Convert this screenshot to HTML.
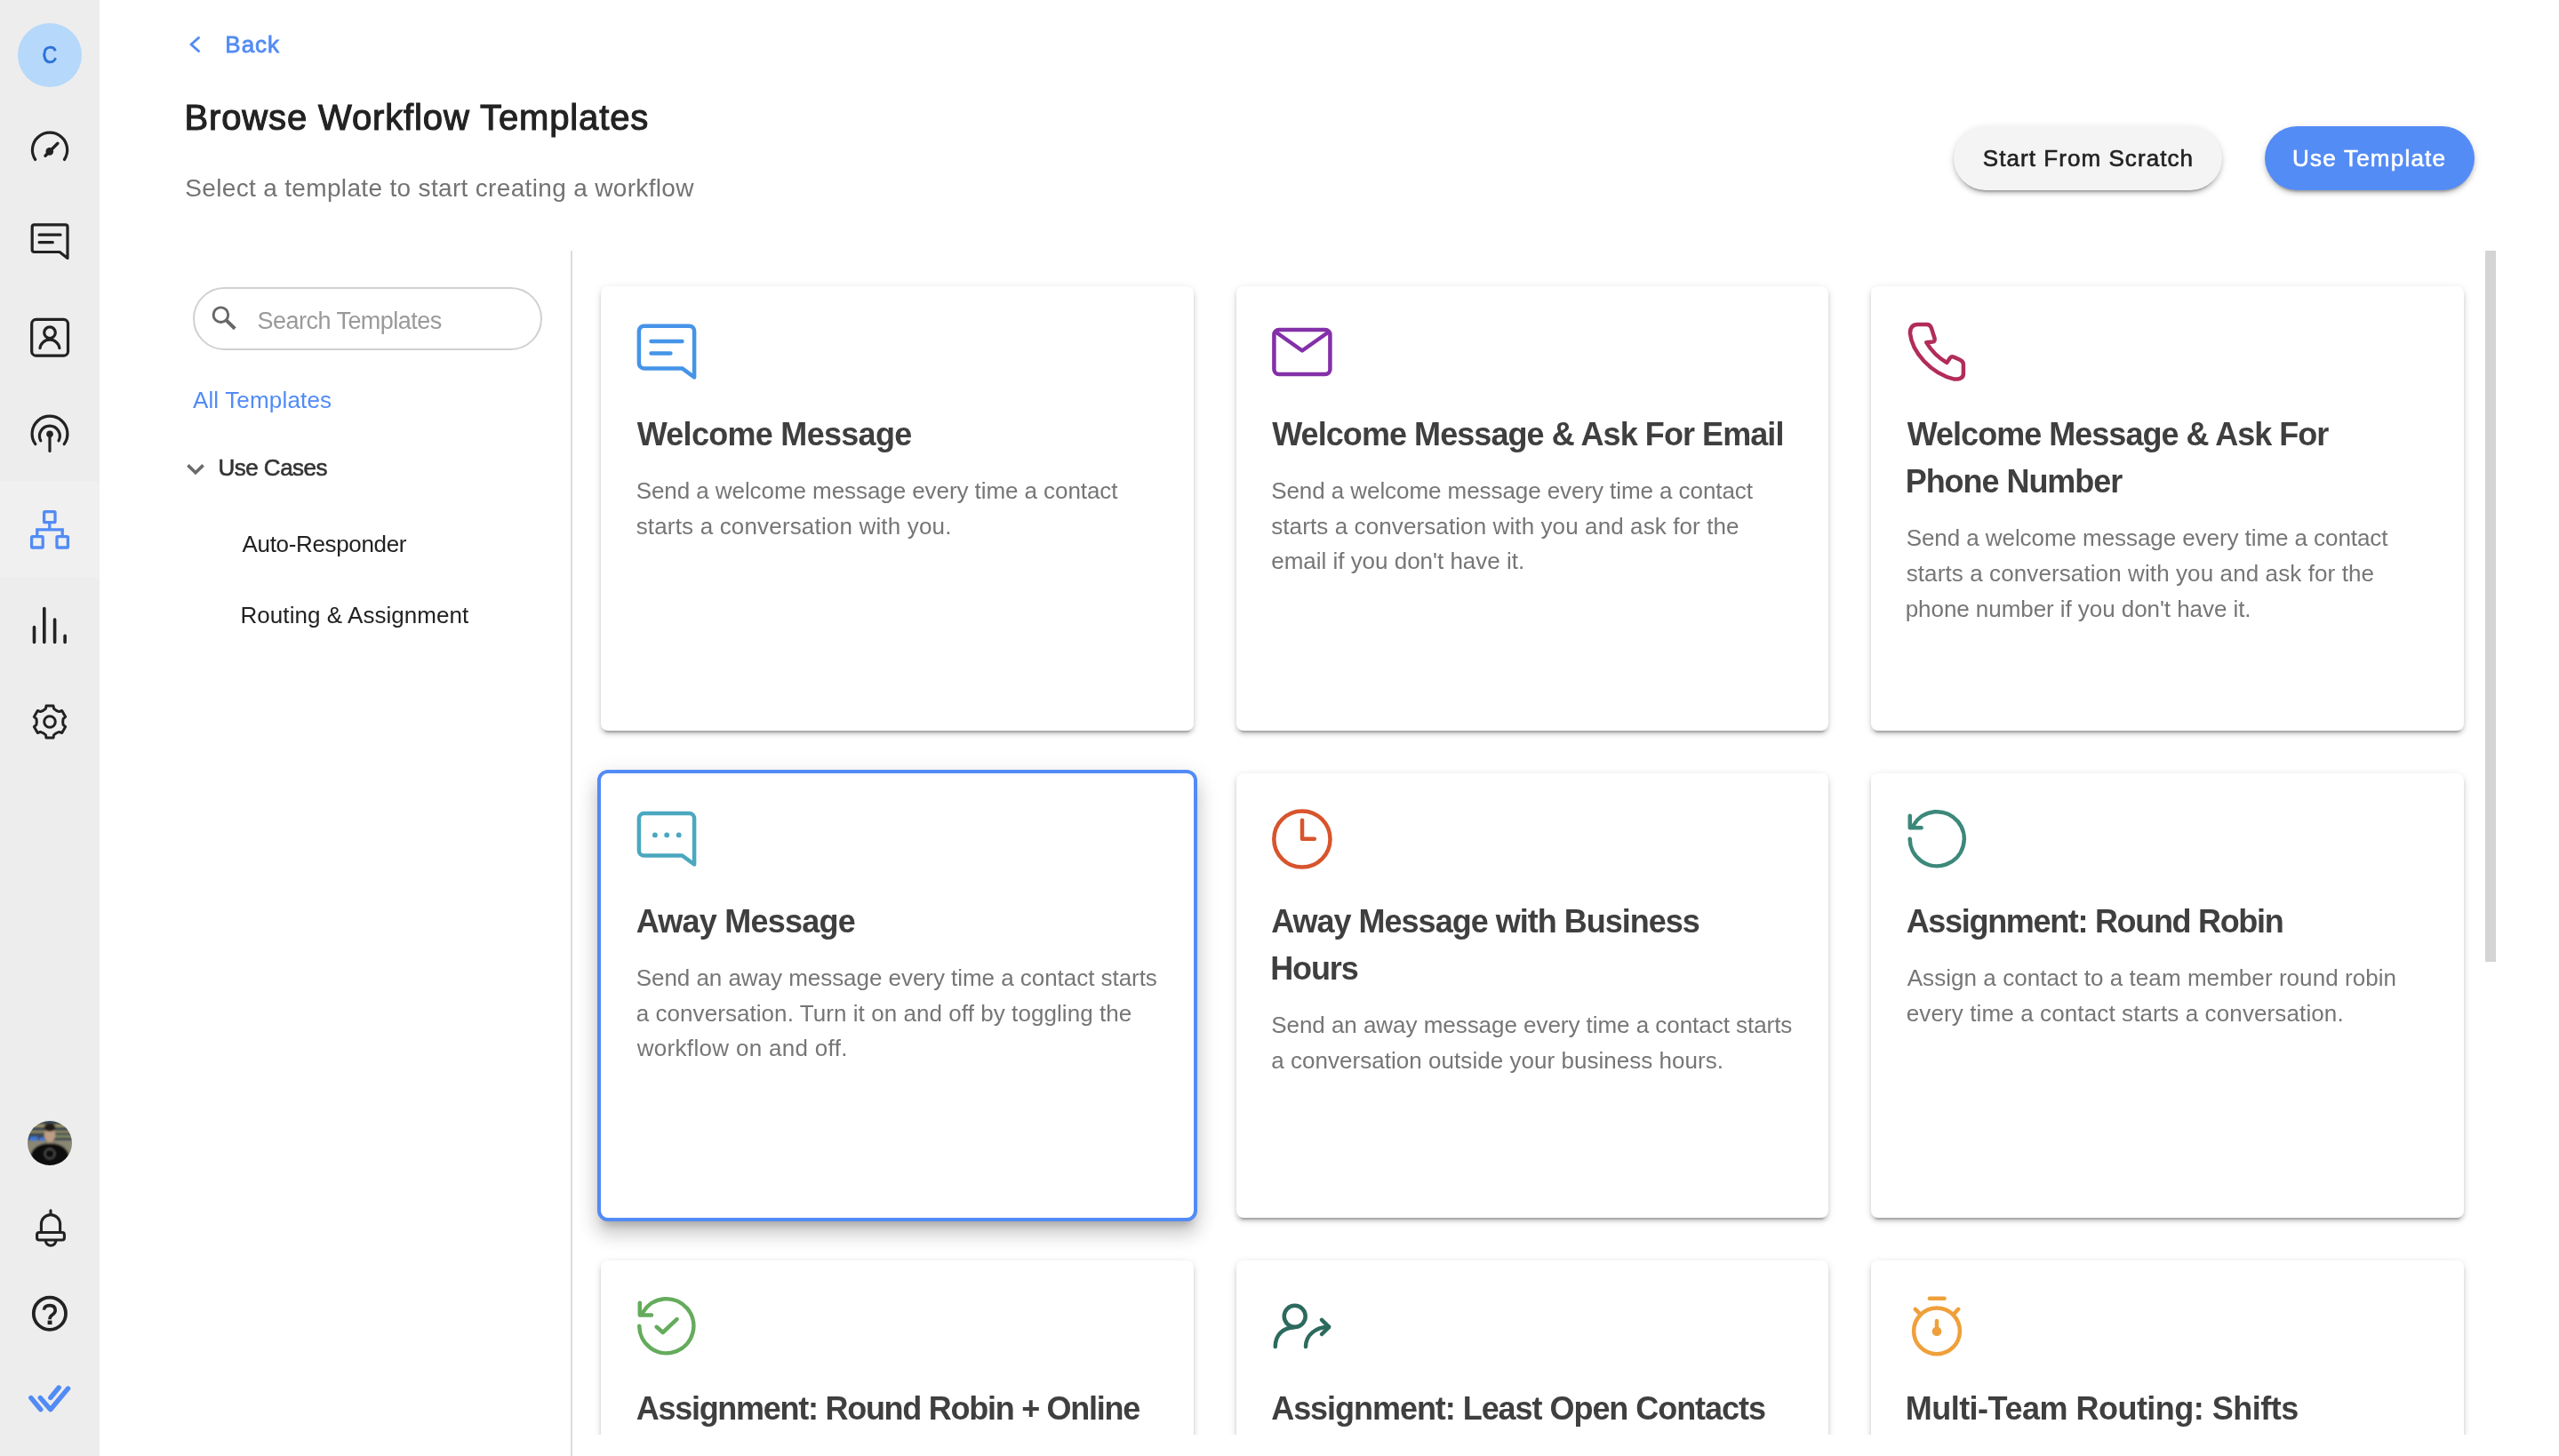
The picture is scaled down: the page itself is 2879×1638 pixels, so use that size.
<!DOCTYPE html>
<html><head><meta charset="utf-8"><title>Browse Workflow Templates</title>
<style>
html,body{margin:0;padding:0;}
body{width:2879px;height:1638px;position:relative;overflow:hidden;background:#fff;font-family:"Liberation Sans", sans-serif;}
.t{position:absolute;white-space:pre;}
.abs{position:absolute;}

#sb{position:absolute;left:0;top:0;width:112px;height:1638px;background:#ededed;}
#sbact{position:absolute;left:0;top:542px;width:112px;height:108px;background:#f0f0f0;}
.btn{position:absolute;border-radius:36px;}
#clip{position:absolute;left:644px;top:282px;width:2176px;height:1332px;overflow:hidden;}
.card{position:absolute;width:666.7px;height:500px;background:#fff;border-radius:8px;box-sizing:border-box;
 box-shadow:0px 6px 2px -4px rgba(0,0,0,0.2),0px 4px 4px 0px rgba(0,0,0,0.14),0px 2px 10px 0px rgba(0,0,0,0.12);}
.sel{width:674.7px;height:508px;margin-left:-4px;margin-top:-4px;border:4px solid #528bf5;border-radius:12px;
 box-shadow:0px 10px 10px -6px rgba(0,0,0,0.2),0px 16px 20px 2px rgba(0,0,0,0.12),0px 6px 24px 2px rgba(0,0,0,0.10);}

</style></head><body>
<div id="sb"></div><div id="sbact"></div><svg class="abs" style="left:0;top:0" width="112" height="1638" viewBox="0 0 112 1638" fill="none" stroke="#222" stroke-width="3.2" stroke-linecap="round" stroke-linejoin="round"><circle cx="56" cy="62" r="36" fill="#b5d8fb" stroke="none"/><path d="M39.7 179.5 A19.6 19.6 0 1 1 72.4 179.5"/><path d="M51 175.2 L64.9 161.3" stroke-width="3.4"/><circle cx="55.8" cy="170.4" r="4.3" fill="#222" stroke="none"/><path d="M38.7 252.8 H73.5 A2.5 2.5 0 0 1 76 255.3 V290.5 L67.1 283.5 H38.7 A2.5 2.5 0 0 1 36.2 281 V255.3 A2.5 2.5 0 0 1 38.7 252.8 Z"/><path d="M44.1 264.2 H68 M44.1 272.7 H59.3"/><rect x="35.7" y="359.4" width="40.8" height="40.8" rx="5"/><circle cx="56" cy="374.2" r="6.3"/><path d="M45 391.7 A11 10.5 0 0 1 66.9 391.7"/><path d="M39.8 499.6 A19.9 19.9 0 1 1 72.2 499.6"/><path d="M45.8 495.8 A11.4 11.4 0 1 1 66 495.8"/><circle cx="56" cy="488.2" r="3.8" fill="#222" stroke="none"/><path d="M56 488 V507.5"/><g stroke="#528bf5" stroke-width="3.3" stroke-linecap="butt" stroke-linejoin="miter"><rect x="49.6" y="575.7" width="12.4" height="12" rx="1"/><rect x="35.6" y="603.6" width="12.6" height="12.4" rx="1"/><rect x="64" y="603.6" width="12.4" height="12.4" rx="1"/><path d="M55.8 589 V595.8 M41.8 602 V595.8 H70.2 V602"/></g><path d="M38.5 705.5 V722.5 M49.8 684.5 V722.5 M61.6 697 V722.5 M73.1 715.3 V722.5" stroke-width="3.6"/><path d="M51.40 797.20 L52.00 793.90 L60.00 793.90 L60.60 797.20 Q63.10 799.70 66.52 800.62 L69.68 799.49 L73.68 806.41 L71.12 808.58 Q70.20 812.00 71.12 815.42 L73.68 817.59 L69.68 824.51 L66.52 823.38 Q63.10 824.30 60.60 826.80 L60.00 830.10 L52.00 830.10 L51.40 826.80 Q48.90 824.30 45.48 823.38 L42.32 824.51 L38.32 817.59 L40.88 815.42 Q41.80 812.00 40.88 808.58 L38.32 806.41 L42.32 799.49 L45.48 800.62 Q48.90 799.70 51.40 797.20 Z" stroke-width="3"/><circle cx="56" cy="812" r="6.3" stroke-width="3"/><path d="M57 1361.8 V1365.5 M46.4 1386 V1377.2 A10.6 10.6 0 0 1 67.6 1377.2 V1386" stroke-width="3.1"/><rect x="41.6" y="1386.5" width="30.8" height="8.5" rx="2.5" stroke-width="3.1"/><path d="M51.3 1395.5 A5.8 5.8 0 0 0 62.9 1395.5" stroke-width="3.1"/><circle cx="55.9" cy="1477.7" r="18.1" stroke-width="3.8"/><path d="M49.4 1473.6 Q49.8 1468.6 56 1468.6 Q62.2 1468.6 62.2 1474.2 Q62.2 1477 58.8 1479.2 Q56 1481 56 1484.2" stroke-width="3.6" stroke-linecap="butt" stroke-linejoin="miter"/><rect x="53.6" y="1485.6" width="4.9" height="4.5" fill="#222" stroke="none"/><path d="M34.8 1572.5 L45.8 1585.7 M45.3 1572.5 L56.8 1585.7 L76.6 1562 M56.8 1572.5 L66.2 1561" stroke="#528bf5" stroke-width="5.4"/></svg><svg class="abs" style="left:31px;top:1261px" width="50" height="50" viewBox="0 0 50 50"><defs><clipPath id="pc"><circle cx="25" cy="25" r="25"/></clipPath><filter id="bl" x="-20%" y="-20%" width="140%" height="140%"><feGaussianBlur stdDeviation="1.1"/></filter></defs><g clip-path="url(#pc)"><g filter="url(#bl)"><rect x="-5" y="-5" width="60" height="60" fill="#8a8774"/><rect x="-5" y="-5" width="60" height="27" fill="#3e4a52"/><rect x="-5" y="4" width="60" height="3" fill="#9c9567"/><rect x="-5" y="11" width="60" height="2.5" fill="#8f8a62"/><rect x="30" y="16" width="25" height="3" fill="#7d8460"/><ellipse cx="7" cy="20" rx="5" ry="2.4" fill="#3a78d8"/><ellipse cx="16.5" cy="20.5" rx="3" ry="2" fill="#3c7ae0"/><ellipse cx="25" cy="15.5" rx="6.2" ry="8.5" fill="#bf9e86"/><ellipse cx="25" cy="7.5" rx="6.5" ry="4.5" fill="#201c19"/><path d="M2 52 L4 36 Q8 27.5 19 25.5 L31 25.5 Q42 27.5 46 36 L48 52 Z" fill="#111"/><circle cx="25" cy="37" r="5.5" fill="none" stroke="#5e5e5e" stroke-width="1.3"/></g></g></svg><div class="t" style="left:40px;top:40px;width:32px;text-align:center;font-size:27px;line-height:44px;color:#2a70d9;-webkit-text-stroke:0.7px #2a70d9;transform:scaleX(0.86);transform-origin:16px 22px;">C</div><svg class="abs" style="left:205px;top:35px" width="30" height="30" viewBox="0 0 30 30" fill="none" stroke="#528bf5" stroke-width="3" stroke-linecap="round" stroke-linejoin="round"><path d="M18.5 7.5 L10 15 L18.5 22.5"/></svg><div class="btn" style="left:2198px;top:142px;width:302px;height:72px;background:#f4f4f4;box-shadow:0 6px 2px -4px rgba(0,0,0,.2),0 4px 4px 0 rgba(0,0,0,.14),0 2px 10px 0 rgba(0,0,0,.12);"></div><div class="btn" style="left:2548px;top:142px;width:235.5px;height:72px;background:#548cf6;box-shadow:0 6px 2px -4px rgba(0,0,0,.2),0 4px 4px 0 rgba(0,0,0,.14),0 2px 10px 0 rgba(0,0,0,.12);"></div><div class="abs" style="left:216.5px;top:322.5px;width:389.5px;height:67px;border:2px solid #d0d0d0;border-radius:36px;"></div><svg class="abs" style="left:236px;top:342px" width="32" height="32" viewBox="0 0 32 32" fill="none" stroke="#666" stroke-width="3.2"><circle cx="12.4" cy="12.2" r="8.3" stroke-width="2.9"/><path d="M18.6 18.4 L28.3 27.8" stroke-width="4"/></svg><div class="abs" style="left:642px;top:282px;width:2px;height:1356px;background:#dcdcdc;"></div><svg class="abs" style="left:206px;top:514px" width="28" height="28" viewBox="0 0 28 28" fill="none" stroke="#6b6b6b" stroke-width="3.6" stroke-linecap="butt" stroke-linejoin="miter"><path d="M5.4 9.4 L14 17.8 L22.6 9.4"/></svg><div class="abs" style="left:2796px;top:282px;width:12px;height:800px;background:#d4d4d4;"></div><div id="clip"><div class="card" style="left:32px;top:40px"></div><div class="card" style="left:746.5px;top:40px"></div><div class="card" style="left:1461px;top:40px"></div><div class="card sel" style="left:32px;top:588px"></div><div class="card" style="left:746.5px;top:588px"></div><div class="card" style="left:1461px;top:588px"></div><div class="card" style="left:32px;top:1136px"></div><div class="card" style="left:746.5px;top:1136px"></div><div class="card" style="left:1461px;top:1136px"></div></div><svg class="abs" style="left:706px;top:354px" width="90" height="82" viewBox="0 0 90 82" fill="none" stroke="#4594e8" stroke-width="4.5" stroke-linecap="round" stroke-linejoin="round"><path d="M18.5 12.7 H69.5 A5.6 5.6 0 0 1 75.1 18.3 V70.5 L61.5 60.4 H18.5 A5.6 5.6 0 0 1 12.9 54.8 V18.3 A5.6 5.6 0 0 1 18.5 12.7 Z"/><path d="M26.5 30 H61.4 M26.5 43.4 H48.4"/></svg><svg class="abs" style="left:1420px;top:354px" width="90" height="82" viewBox="0 0 90 82" fill="none" stroke="#8430a8" stroke-width="4.5" stroke-linecap="round" stroke-linejoin="round"><rect x="13.4" y="17.1" width="63" height="50" rx="5.5"/><path d="M16 20 L45 40.5 L74 20"/></svg><svg class="abs" style="left:2134px;top:354px" width="90" height="82" viewBox="0 0 90 82" fill="none" stroke="#b22c5a" stroke-width="4.5" stroke-linecap="round" stroke-linejoin="round"><path d="M23.6 11 H33.8 Q37.6 11 38.9 15.2 L42.5 26.5 Q43.4 30.1 40.5 30.5 L33.2 31.2 Q42 46 56.3 54 L60 48.6 Q61.5 46.6 64 47.6 L71 50.7 Q74.9 52.6 74.9 56 V66.4 Q74.9 72.6 64.8 72.6 C38 66 17 42 14.9 20.8 Q14.9 11 23.6 11 Z"/></svg><svg class="abs" style="left:706px;top:902px" width="90" height="82" viewBox="0 0 90 82" fill="none" stroke="#4aa8bf" stroke-width="4.5" stroke-linecap="round" stroke-linejoin="round"><path d="M18.5 13.1 H69.5 A5.6 5.6 0 0 1 75.1 18.7 V70.5 L61.5 60.5 H18.5 A5.6 5.6 0 0 1 12.9 54.9 V18.7 A5.6 5.6 0 0 1 18.5 13.1 Z"/><circle cx="30.9" cy="37.4" r="2.9" fill="#4aa8bf" stroke="none"/><circle cx="44.2" cy="37.4" r="2.9" fill="#4aa8bf" stroke="none"/><circle cx="57.7" cy="37.4" r="2.9" fill="#4aa8bf" stroke="none"/></svg><svg class="abs" style="left:1420px;top:902px" width="90" height="82" viewBox="0 0 90 82" fill="none" stroke="#d8542d" stroke-width="4.5" stroke-linecap="round" stroke-linejoin="round"><circle cx="44.9" cy="42" r="31.6"/><path d="M45 20.8 V41.7 H58.8"/></svg><svg class="abs" style="left:2134px;top:902px" width="90" height="82" viewBox="0 0 90 82" fill="none" stroke="#3c897b" stroke-width="4.5" stroke-linecap="round" stroke-linejoin="round"><path d="M14.65 41.8 A30.55 30.55 0 1 0 18.7 26.5"/><path d="M14.75 15.8 V29.3 H27.6"/></svg><svg class="abs" style="left:706px;top:1450px" width="90" height="82" viewBox="0 0 90 82" fill="none" stroke="#64ac5c" stroke-width="4.5" stroke-linecap="round" stroke-linejoin="round"><path d="M13.25 41.8 A30.55 30.55 0 1 0 17.3 26.5"/><path d="M13.8 15.8 V29.6 H27"/><path d="M32.7 42.8 L39.7 49 L55.5 34.1"/></svg><svg class="abs" style="left:1420px;top:1450px" width="90" height="82" viewBox="0 0 90 82" fill="none" stroke="#2c6a5e" stroke-width="4.5" stroke-linecap="round" stroke-linejoin="round"><circle cx="36.7" cy="30.8" r="12"/><path d="M14.75 65 C14.75 52 23 43.5 36.5 43.2"/><path d="M49 65 C49 52 60 43 74.9 42.8"/><path d="M67 34.9 L75.2 42.8 L67 51"/></svg><svg class="abs" style="left:2134px;top:1450px" width="90" height="82" viewBox="0 0 90 82" fill="none" stroke="#efa03b" stroke-width="4.5" stroke-linecap="round" stroke-linejoin="round"><path d="M36.9 10.7 H53.5"/><circle cx="45" cy="47.4" r="25.9"/><path d="M20.8 22.8 L25.6 27.6 M69.3 22.8 L64.7 27.6 M45 36 V47"/><circle cx="45" cy="47.7" r="5.3" fill="#efa03b" stroke="none"/></svg>
<div id="tx" style="position:absolute;left:0;top:0;width:2879px;height:1638px;will-change:transform;">
<div class='t' style='left:253.3px;top:37.0px;font-size:26px;line-height:26px;font-weight:400;color:#528bf5;letter-spacing:1.000px;-webkit-text-stroke:0.8px #528bf5;'>Back</div>
<div class='t' style='left:207.4px;top:112.2px;font-size:40px;line-height:40px;font-weight:400;color:#222;letter-spacing:0.875px;-webkit-text-stroke:1.1px #222;'>Browse Workflow Templates</div>
<div class='t' style='left:208.3px;top:197.7px;font-size:28px;line-height:28px;font-weight:400;color:#737373;letter-spacing:0.333px;'>Select a template to start creating a workflow</div>
<div class='t' style='left:2230.8px;top:165.0px;font-size:26px;line-height:26px;font-weight:400;color:#222;letter-spacing:1.059px;-webkit-text-stroke:0.6px #222;'>Start From Scratch</div>
<div class='t' style='left:2579.0px;top:165.0px;font-size:26px;line-height:26px;font-weight:400;color:#fff;letter-spacing:1.227px;-webkit-text-stroke:0.6px #fff;'>Use Template</div>
<div class='t' style='left:289.6px;top:347.7px;font-size:27px;line-height:27px;font-weight:400;color:#9a9a9a;letter-spacing:-0.533px;'>Search Templates</div>
<div class='t' style='left:216.9px;top:436.5px;font-size:26px;line-height:26px;font-weight:400;color:#528bf5;letter-spacing:0.167px;'>All Templates</div>
<div class='t' style='left:245.4px;top:512.7px;font-size:26px;line-height:26px;font-weight:400;color:#333;letter-spacing:-0.500px;-webkit-text-stroke:0.6px #333;'>Use Cases</div>
<div class='t' style='left:272.5px;top:599.1px;font-size:26px;line-height:26px;font-weight:400;color:#222;letter-spacing:-0.338px;'>Auto-Responder</div>
<div class='t' style='left:270.5px;top:679.0px;font-size:26px;line-height:26px;font-weight:400;color:#222;letter-spacing:0.053px;'>Routing &amp; Assignment</div>
<div class='t' style='left:716.7px;top:470.7px;font-size:36px;line-height:36px;font-weight:700;color:#3f3f3f;letter-spacing:-0.714px;'>Welcome Message</div>
<div class='t' style='left:715.7px;top:538.9px;font-size:26px;line-height:26px;font-weight:400;color:#767676;letter-spacing:-0.071px;'>Send a welcome message every time a contact</div>
<div class='t' style='left:715.7px;top:578.5px;font-size:26px;line-height:26px;font-weight:400;color:#767676;letter-spacing:0.167px;'>starts a conversation with you.</div>
<div class='t' style='left:1431.2px;top:470.7px;font-size:36px;line-height:36px;font-weight:700;color:#3f3f3f;letter-spacing:-0.933px;'>Welcome Message &amp; Ask For Email</div>
<div class='t' style='left:1430.2px;top:538.9px;font-size:26px;line-height:26px;font-weight:400;color:#767676;letter-spacing:-0.071px;'>Send a welcome message every time a contact</div>
<div class='t' style='left:1430.2px;top:578.5px;font-size:26px;line-height:26px;font-weight:400;color:#767676;letter-spacing:0.102px;'>starts a conversation with you and ask for the</div>
<div class='t' style='left:1430.2px;top:618.1px;font-size:26px;line-height:26px;font-weight:400;color:#767676;letter-spacing:-0.015px;'>email if you don&#x27;t have it.</div>
<div class='t' style='left:2145.7px;top:470.7px;font-size:36px;line-height:36px;font-weight:700;color:#3f3f3f;letter-spacing:-0.979px;'>Welcome Message &amp; Ask For</div>
<div class='t' style='left:2143.7px;top:524.2px;font-size:36px;line-height:36px;font-weight:700;color:#3f3f3f;letter-spacing:-1.045px;'>Phone Number</div>
<div class='t' style='left:2144.7px;top:592.4px;font-size:26px;line-height:26px;font-weight:400;color:#767676;letter-spacing:-0.071px;'>Send a welcome message every time a contact</div>
<div class='t' style='left:2144.7px;top:632.0px;font-size:26px;line-height:26px;font-weight:400;color:#767676;letter-spacing:0.102px;'>starts a conversation with you and ask for the</div>
<div class='t' style='left:2143.7px;top:671.6px;font-size:26px;line-height:26px;font-weight:400;color:#767676;letter-spacing:-0.061px;'>phone number if you don&#x27;t have it.</div>
<div class='t' style='left:715.7px;top:1018.7px;font-size:36px;line-height:36px;font-weight:700;color:#3f3f3f;letter-spacing:-0.773px;'>Away Message</div>
<div class='t' style='left:715.7px;top:1086.9px;font-size:26px;line-height:26px;font-weight:400;color:#767676;letter-spacing:-0.043px;'>Send an away message every time a contact starts</div>
<div class='t' style='left:715.7px;top:1126.5px;font-size:26px;line-height:26px;font-weight:400;color:#767676;letter-spacing:0.061px;'>a conversation. Turn it on and off by toggling the</div>
<div class='t' style='left:716.7px;top:1166.1px;font-size:26px;line-height:26px;font-weight:400;color:#767676;letter-spacing:0.316px;'>workflow on and off.</div>
<div class='t' style='left:1430.2px;top:1018.7px;font-size:36px;line-height:36px;font-weight:700;color:#3f3f3f;letter-spacing:-1.000px;'>Away Message with Business</div>
<div class='t' style='left:1429.2px;top:1072.2px;font-size:36px;line-height:36px;font-weight:700;color:#3f3f3f;letter-spacing:-1.100px;'>Hours</div>
<div class='t' style='left:1430.2px;top:1140.4px;font-size:26px;line-height:26px;font-weight:400;color:#767676;letter-spacing:-0.043px;'>Send an away message every time a contact starts</div>
<div class='t' style='left:1430.2px;top:1180.0px;font-size:26px;line-height:26px;font-weight:400;color:#767676;letter-spacing:0.038px;'>a conversation outside your business hours.</div>
<div class='t' style='left:2144.7px;top:1018.7px;font-size:36px;line-height:36px;font-weight:700;color:#3f3f3f;letter-spacing:-1.318px;'>Assignment: Round Robin</div>
<div class='t' style='left:2145.7px;top:1086.9px;font-size:26px;line-height:26px;font-weight:400;color:#767676;letter-spacing:0.059px;'>Assign a contact to a team member round robin</div>
<div class='t' style='left:2144.7px;top:1126.5px;font-size:26px;line-height:26px;font-weight:400;color:#767676;letter-spacing:0.119px;'>every time a contact starts a conversation.</div>
<div class='t' style='left:715.7px;top:1566.7px;font-size:36px;line-height:36px;font-weight:700;color:#3f3f3f;letter-spacing:-1.271px;'>Assignment: Round Robin + Online</div>
<div class='t' style='left:1430.2px;top:1566.7px;font-size:36px;line-height:36px;font-weight:700;color:#3f3f3f;letter-spacing:-1.043px;'>Assignment: Least Open Contacts</div>
<div class='t' style='left:2143.7px;top:1566.7px;font-size:36px;line-height:36px;font-weight:700;color:#3f3f3f;letter-spacing:-0.508px;'>Multi-Team Routing: Shifts</div>
</div>
</body></html>
